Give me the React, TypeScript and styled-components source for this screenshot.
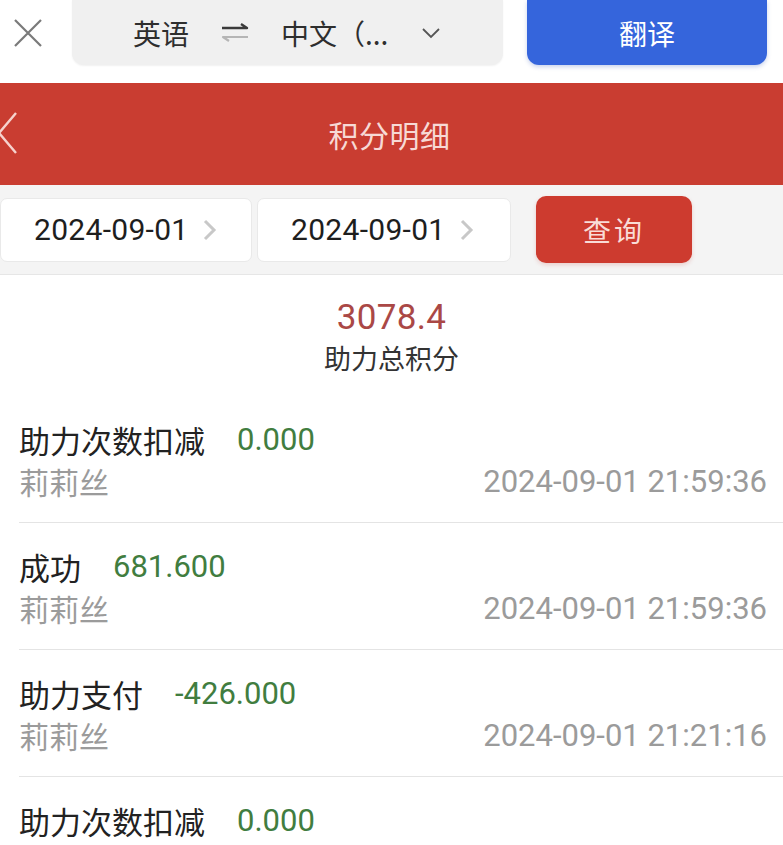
import React from 'react';
import styled, { createGlobalStyle } from 'styled-components';

const GlobalStyle = createGlobalStyle`
  html, body {
    margin: 0;
    padding: 0;
    background: #ffffff;
  }
  body {
    font-family: Roboto, "Noto Sans CJK SC", sans-serif;
    overflow: hidden;
  }
`;

interface Record {
  title: string;
  amount: string;
  name: string;
  time: string;
}

const records: Record[] = [
  { title: '助力次数扣减', amount: '0.000', name: '莉莉丝', time: '2024-09-01 21:59:36' },
  { title: '成功', amount: '681.600', name: '莉莉丝', time: '2024-09-01 21:59:36' },
  { title: '助力支付', amount: '-426.000', name: '莉莉丝', time: '2024-09-01 21:21:16' },
  { title: '助力次数扣减', amount: '0.000', name: '莉莉丝', time: '2024-09-01 21:59:36' },
];

const App: React.FC = () => {
  return (
    <Page>
      <GlobalStyle />

      {/* translate toolbar */}
      <TopBar>
        <CloseButton>
          <svg width="30" height="30" viewBox="0 0 30 30">
            <path d="M2 2 L28 28 M28 2 L2 28" stroke="#7a7a7a" strokeWidth="2.2" fill="none" />
          </svg>
        </CloseButton>
        <LangPill>
          <LangText>英语</LangText>
          <svg width="28" height="20" viewBox="0 0 28 20">
            <path d="M1 5 H26 L20 1" stroke="#3a3a3a" strokeWidth="2.4" fill="none" strokeLinejoin="round" />
            <path d="M27 14 H2 L8 18" stroke="#b5b5b5" strokeWidth="2.2" fill="none" strokeLinejoin="round" />
          </svg>
          <LangText>中文（...</LangText>
          <svg width="18" height="12" viewBox="0 0 18 12">
            <path d="M1 2 L9 10 L17 2" stroke="#555" strokeWidth="1.8" fill="none" />
          </svg>
        </LangPill>
        <TranslateButton>翻译</TranslateButton>
      </TopBar>

      <Header>
        <BackIcon>
          <svg width="20" height="42" viewBox="0 0 20 42">
            <path d="M18 1 L1 21 L18 41" stroke="#f6d2cd" strokeWidth="2.4" fill="none" />
          </svg>
        </BackIcon>
        <HeaderTitle>积分明细</HeaderTitle>
      </Header>

      <FilterBar>
        <DateBox $width={252}>
          2024-09-01
          <Chevron />
        </DateBox>
        <DateBox $width={254}>
          2024-09-01
          <Chevron />
        </DateBox>
        <QueryButton>查询</QueryButton>
      </FilterBar>

      <Summary>
        <TotalValue>3078.4</TotalValue>
        <TotalLabel>助力总积分</TotalLabel>
      </Summary>

      <List>
        {records.map((r, i) => (
          <Row key={i}>
            <RowLine>
              <RowTitle>{r.title}</RowTitle>
              <Amount>{r.amount}</Amount>
            </RowLine>
            <RowLine $spread>
              <Muted>{r.name}</Muted>
              <Stamp>{r.time}</Stamp>
            </RowLine>
          </Row>
        ))}
      </List>
    </Page>
  );
};

const Chevron: React.FC = () => (
  <ChevronWrap>
    <svg width="14" height="22" viewBox="0 0 14 22">
      <path d="M2 2 L11 11 L2 20" stroke="#c8c8c8" strokeWidth="3" fill="none" />
    </svg>
  </ChevronWrap>
);

const Page = styled.div`
  width: 783px;
  height: 845px;
  overflow: hidden;
  background: #ffffff;
`;

const TopBar = styled.div`
  height: 83px;
  display: flex;
  align-items: flex-start;
  background: #ffffff;
`;

const CloseButton = styled.div`
  width: 72px;
  height: 65px;
  display: flex;
  align-items: center;
  justify-content: center;
  padding-right: 16px;
  box-sizing: border-box;
`;

const LangPill = styled.div`
  width: 431px;
  height: 65px;
  background: #f0f0f0;
  border-radius: 0 0 12px 12px;
  box-shadow: 0 1px 2px rgba(0, 0, 0, 0.06);
  display: flex;
  align-items: center;
  box-sizing: border-box;
  padding-left: 61px;
  gap: 32px;

  svg:last-child {
    margin-left: 2px;
  }
`;

const LangText = styled.span`
  font-family: "Noto Sans CJK SC", sans-serif;
  font-size: 28px;
  color: #2e2e2e;
  line-height: 1;
`;

const TranslateButton = styled.div`
  margin-left: 24px;
  width: 240px;
  height: 65px;
  background: #3565dc;
  border-radius: 0 0 12px 12px;
  box-shadow: 0 2px 4px rgba(40, 80, 180, 0.25);
  display: flex;
  align-items: center;
  justify-content: center;
  color: #ffffff;
  font-family: "Noto Sans CJK SC", sans-serif;
  font-size: 28px;
`;

const Header = styled.div`
  position: relative;
  height: 102px;
  background: #c93d31;
  display: flex;
  align-items: center;
  justify-content: center;
`;

const BackIcon = styled.div`
  position: absolute;
  left: -2px;
  top: 29px;
  display: flex;
`;

const HeaderTitle = styled.div`
  font-family: "Noto Sans CJK SC", sans-serif;
  font-size: 30px;
  color: #f7d9d5;
  letter-spacing: 0.5px;
  padding-right: 4px;
`;

const FilterBar = styled.div`
  height: 90px;
  background: #f4f4f4;
  border-bottom: 1px solid #e6e6e6;
  display: flex;
  align-items: center;
  gap: 5px;
  box-sizing: border-box;
`;

const DateBox = styled.div<{ $width: number }>`
  width: ${(p) => p.$width}px;
  height: 64px;
  background: #ffffff;
  border: 1px solid #e9e9e9;
  border-radius: 7px;
  box-sizing: border-box;
  display: flex;
  align-items: center;
  padding-left: 33px;
  font-size: 30px;
  letter-spacing: 0.3px;
  color: #1e1e1e;
`;

const ChevronWrap = styled.span`
  display: flex;
  margin-left: 15px;
`;

const QueryButton = styled.div`
  margin-left: 20px;
  width: 156px;
  height: 67px;
  background: #cd3b2f;
  border-radius: 10px;
  box-shadow: 0 2px 4px rgba(200, 60, 50, 0.2);
  display: flex;
  align-items: center;
  justify-content: center;
  color: #f9dcd7;
  font-family: "Noto Sans CJK SC", sans-serif;
  font-size: 28px;
  letter-spacing: 3px;
`;

const Summary = styled.div`
  padding: 22px 0 19px;
  display: flex;
  flex-direction: column;
  align-items: center;
`;

const TotalValue = styled.div`
  font-size: 35px;
  line-height: 42px;
  letter-spacing: 0.3px;
  color: #aa4846;
`;

const TotalLabel = styled.div`
  font-family: "Noto Sans CJK SC", sans-serif;
  font-size: 27px;
  line-height: 38px;
  color: #333333;
`;

const List = styled.div`
  padding-left: 19px;
`;

const Row = styled.div`
  padding: 22px 16px 20px 0;
  border-bottom: 1px solid #e4e4e4;
`;

const RowLine = styled.div<{ $spread?: boolean }>`
  display: flex;
  align-items: center;
  justify-content: ${(p) => (p.$spread ? 'space-between' : 'flex-start')};
  height: 42px;
`;

const RowTitle = styled.span`
  font-family: "Noto Sans CJK SC", sans-serif;
  font-size: 31px;
  color: #222222;
`;

const Amount = styled.span`
  margin-left: 32px;
  font-size: 31px;
  color: #417d3f;
`;

const Muted = styled.span`
  font-family: "Noto Sans CJK SC", sans-serif;
  font-size: 30px;
  color: #9b9b9b;
`;

const Stamp = styled.span`
  font-size: 31px;
  color: #9b9b9b;
`;

export default App;
